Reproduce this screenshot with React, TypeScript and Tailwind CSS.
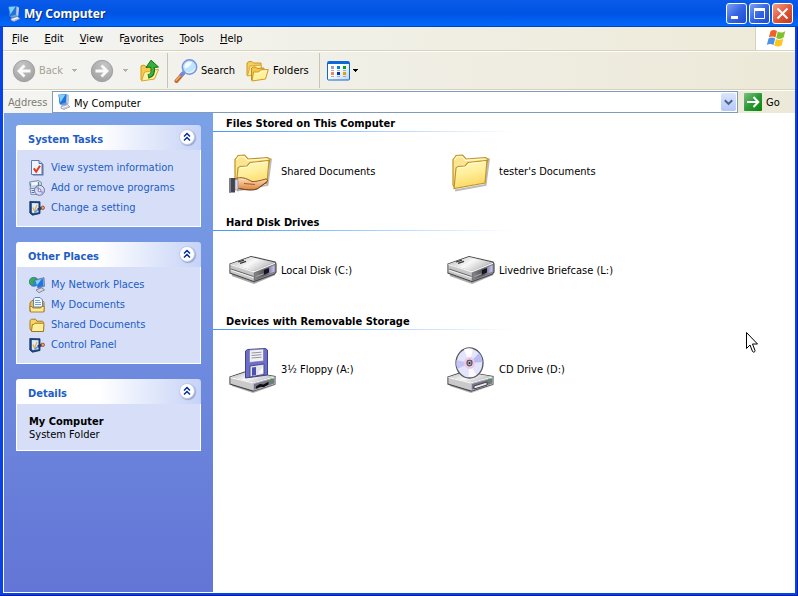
import type { ReactNode } from "react";

const menus = [
  { before: "", key: "F", after: "ile" },
  { before: "", key: "E", after: "dit" },
  { before: "", key: "V", after: "iew" },
  { before: "F", key: "a", after: "vorites" },
  { before: "", key: "T", after: "ools" },
  { before: "", key: "H", after: "elp" },
];

/* ---------- small icons ---------- */

function ComputerIcon() {
  return (
    <svg width="16" height="16" viewBox="0 0 16 16" className="shrink-0">
      <path d="M5 12.500 11.500 10.500l2.500 2.300L8 15.500 5 14.300z" fill="#c9ccd8" stroke="#8b8fa0" strokeWidth=".6" />
      <path d="M6 13.600 12 11.600" stroke="#fff" strokeWidth=".9" />
      <path d="M2.500.8 11 .3l2 1.500-.8 8.500L6 11.800 3.500 10z" fill="#6f9cd8" />
      <path d="M2.500.8 10.500.3 10 8.500 4 10.200z" fill="#1f74dc" />
      <path d="M2.800 1 9.500.6 4.500 8.200z" fill="#7fd0fb" />
      <path d="m10.700.4 2.300 1.400-.8 8.500-2-1.500z" fill="#b9c9e6" />
    </svg>
  );
}

function SystemInfoIcon() {
  return (
    <svg width="16" height="16" viewBox="0 0 16 16">
      <path d="M4 2.500h8l2.500 2V15.500H4z" fill="#42507c" opacity=".75" />
      <path d="M2.500.5h7.500l3 3v11H2.500z" fill="#eef4ff" stroke="#6379ad" />
      <path d="M10 .5v3h3" fill="#bfcdea" stroke="#40558c" strokeWidth=".8" />
      <path d="m4.800 8.300 2.400 3.400L11 5.800" fill="none" stroke="#e8381c" strokeWidth="2" />
    </svg>
  );
}

function ProgramsIcon() {
  return (
    <svg width="16" height="16" viewBox="0 0 16 16">
      <path d="m.5 2 9-1.500 3 2V9L2 12z" fill="#c5d3e8" stroke="#6c7fa6" strokeWidth=".8" />
      <path d="m2.500 2.500 6-.8v3l-6 .8z" fill="#f4f8fd" />
      <path d="M1.500 3.500v3M9.500 2v4" stroke="#4e9c68" />
      <path d="M1 8.500h7v6H2z" fill="#e4eaf3" stroke="#6d7f9f" strokeWidth=".8" />
      <path d="M2.500 10.500h3M2.500 12.500h3" stroke="#3978c8" />
      <circle cx="10.500" cy="10.300" r="5" fill="#dcdef8" stroke="#62668e" strokeWidth=".9" />
      <path d="m10.500 10.300-4-2.500a5 5 0 0 1 3-2zM10.500 10.300l4.500 1.500-2 2.500z" fill="#9ea0ea" />
      <circle cx="10.500" cy="10.300" r="1.400" fill="#fff" stroke="#5a5d78" strokeWidth=".8" />
    </svg>
  );
}

function SettingIcon() {
  return (
    <svg width="16" height="16" viewBox="0 0 16 16">
      <path d="m.8 1.500 10.200.3V13.500L3.500 15.200.8 13z" fill="#1d4588" stroke="#142d5e" strokeWidth=".8" />
      <path d="m2.800 3 6.700.2v9L4 13.300l-1.200-1z" fill="#dcebfb" />
      <path d="m3.800 7.500 1.700 3.500 2.500-6" fill="none" stroke="#e4b03c" strokeWidth="1.200" />
      <path d="m5.500 12.500 4.500-4" stroke="#5f93d6" strokeWidth="1.600" />
      <path d="m9 9.500 4-1.800" stroke="#1f3f78" strokeWidth="2.600" />
      <circle cx="13.800" cy="7.800" r="1.700" fill="#e9a06d" stroke="#803516" strokeWidth=".7" />
    </svg>
  );
}

function NetworkIcon() {
  return (
    <svg width="16" height="16" viewBox="0 0 16 16">
      <circle cx="4.800" cy="4.800" r="4.500" fill="#2888d6" stroke="#1a5a9a" strokeWidth=".6" />
      <path d="M1.500 2C3.500 0 6 .3 7 1.500L5.500 4 3.500 4.500 4.500 7 3 8.300C.5 6.500 0 4 1.500 2z" fill="#3bab42" />
      <path d="m5.500 3 9.500-2.300.5 8.500-6.500 2z" fill="#86a7db" stroke="#49659c" strokeWidth=".7" />
      <path d="m6.500 3.700 7.300-1.800.3 7-5 1.600z" fill="#1f76df" />
      <path d="m6.500 3.700 6-1.500-4.500 6z" fill="#85d2fa" />
      <path d="m7 13 5.500-2.200 3 2L10 15.700z" fill="#d5d8e2" stroke="#6c7284" strokeWidth=".8" />
    </svg>
  );
}

function DocumentsIcon() {
  return (
    <svg width="16" height="16" viewBox="0 0 16 16">
      <path d="M1 6 3 3.500h10.500l1.500 2v9H1z" fill="#efbf4f" stroke="#a9711b" />
      <path d="M4.500 10V2L6 .5h5L13.500 3v7z" fill="#f3f8ff" stroke="#4d7bb4" strokeWidth=".9" />
      <path d="M6 3.500h5M6 5.500h6M6 7.500h6" stroke="#72a7df" />
      <path d="M.8 9.500h2l1 1.500h8l1-1.500h2.500l-.5 5.500H1.500z" fill="#ffeb98" stroke="#a8741f" strokeWidth=".9" />
    </svg>
  );
}

function FolderIcon() {
  return (
    <svg width="16" height="16" viewBox="0 0 16 16">
      <path d="M1 12V3.500l1.500-1.300h4l1.500 2h5.500l1 1V14H2.500z" fill="#f6d566" stroke="#a97a1f" />
      <path d="m2.500 14 .8-6.500h1.500L6 6.200h8.500L15 7l-.5 7.500h-12z" fill="#ffef98" stroke="#a8751f" />
    </svg>
  );
}

function WindowsFlag() {
  return (
    <svg width="20" height="19" viewBox="0 0 20 19">
      <path d="M4.500 2.200C6.500.6 8.500.6 11 2L9.400 8.500C7 7.200 5 7.200 2.800 8.500z" fill="#ef6329" />
      <path d="M11.800 2.500c2.200 1.300 4.500 1.500 7.500-.5l-1.700 6.600c-2.500 1.700-5 1.600-7.400.4z" fill="#80c22e" />
      <path d="M2.500 9.500c2.200-1.500 4.300-1.300 6.700-.1l-1.700 6.700c-2.500-1.400-4.500-1.200-6.700 0z" fill="#4c93e5" />
      <path d="M10 9.900c2.500 1.200 5 1.300 7.300-.2l-1.700 6.700c-2.500 1.600-5 1.400-7.300.1z" fill="#fdc61e" />
    </svg>
  );
}

/* ---------- toolbar icons ---------- */

function ArrowDisc({ flip }: { flip?: boolean }) {
  return (
    <svg width="24" height="24" viewBox="0 0 24 24" className={flip ? "-scale-x-100" : ""}>
      <defs>
        <radialGradient id="disc" cx=".4" cy=".25" r=".8">
          <stop offset="0" stopColor="#c6c6c6" />
          <stop offset="1" stopColor="#a0a0a0" />
        </radialGradient>
      </defs>
      <circle cx="12" cy="12" r="10.700" fill="url(#disc)" stroke="#989898" strokeWidth=".8" />
      <path d="M18.500 12H8M12.500 6.500 7 12l5.500 5.500" fill="none" stroke="#fafafa" strokeWidth="2.800" />
    </svg>
  );
}

function UpIcon() {
  return (
    <svg width="22" height="24" viewBox="0 0 22 24">
      <path d="M2 21V7l3-1 2 1.500 5-.5 1 12z" fill="#f6ca4c" stroke="#cf9a20" />
      <path d="m2.500 22 3-9 5-.5 1.500-1.500 7.500-.5-4 9.500z" fill="#fff2a4" stroke="#d7a52c" />
      <path d="M9 17.500c5-1 5.500-4.500 4.500-10" fill="none" stroke="#156f17" strokeWidth="4.500" />
      <path d="M12 1.200 19.500 8l-4 .5-5.500-.3L7 8.500z" fill="#38b03b" stroke="#156f17" />
      <path d="M9.500 17c4.500-1 4.800-4.500 3.800-10" fill="none" stroke="#3bb43d" strokeWidth="2.600" />
    </svg>
  );
}

function SearchIcon() {
  return (
    <svg width="24" height="24" viewBox="0 0 24 24">
      <path d="M2.500 22 9 14.500" stroke="#c4652a" strokeWidth="4" strokeLinecap="round" />
      <path d="M2.300 21.300 6.500 16.500" stroke="#f0a86a" strokeWidth="1.600" strokeLinecap="round" />
      <path d="m6.500 17 3.500-3.800" stroke="#6f8cda" strokeWidth="3.600" />
      <circle cx="15.500" cy="8" r="7.200" fill="#bce4fb" stroke="#7793dc" strokeWidth="1.500" />
      <path d="M10.500 8a5 5 0 0 1 7.500-4.500c-1 3-4 5.500-7.500 6z" fill="#f4fcff" />
      <path d="M12 12.700a6 6 0 0 0 9-3.500" fill="none" stroke="#e0f4ff" strokeWidth="1.300" />
    </svg>
  );
}

function FoldersIcon() {
  return (
    <svg width="24" height="22" viewBox="0 0 24 22">
      <path d="M1 15.500V3l2-1.500h3L7.500 3H15v11z" fill="#f5cf5d" stroke="#cc9826" />
      <path d="M1.500 16 4 6l11-1 1 8z" fill="#fff0a0" stroke="#d7a535" />
      <path d="M5.500 20V8l2-1 2.500.200 1 1.300 7-.5V18z" fill="#f3c74c" stroke="#c78d1b" />
      <path d="m6 21 1.500-9h5l2-2 7.800-.5L19.500 19z" fill="#fff09a" stroke="#cf9926" />
      <path d="m9 13.500 4.500-.2 2-2 5-.3" fill="none" stroke="#fffbe0" />
    </svg>
  );
}

function ViewsIcon() {
  return (
    <svg width="23" height="20" viewBox="0 0 23 20">
      <defs>
        <linearGradient id="views" x1="0" y1="0" x2="1" y2="1">
          <stop offset=".4" stopColor="#fff" />
          <stop offset="1" stopColor="#bcd4f4" />
        </linearGradient>
      </defs>
      <rect x=".5" y=".5" width="22" height="18.500" rx="1" fill="url(#views)" stroke="#1366cb" />
      <rect x="1" y="1" width="21" height="2" fill="#0c66dc" />
      <path d="M4 5h3v3H4z" fill="#9c9bd0" />
      <path d="M10 5h3v3h-3z" fill="#0080ef" />
      <path d="M16 5h3v3h-3z" fill="#09a209" />
      <path d="M4 11h3v3H4z" fill="#ff8054" />
      <path d="M10 11h3v3h-3z" fill="#0535a5" />
      <path d="M16 11h3v3h-3z" fill="#d7a508" />
      <path d="M4 9.500h3M10 9.500h3M16 9.500h3M4 15.500h3M10 15.500h3M16 15.500h3" stroke="#adadad" />
    </svg>
  );
}

function DownArrow({ color }: { color: string }) {
  return (
    <svg width="5" height="3" viewBox="0 0 5 3" shapeRendering="crispEdges">
      <path d="M0 0h5v1H0zM1 1h3v1H1zM2 2h1v1H2z" fill={color} />
    </svg>
  );
}

/* ---------- large icons ---------- */

function LargeFolder({ shared }: { shared?: boolean }) {
  return (
    <svg width="48" height="48" viewBox="0 0 48 48">
      <defs>
        <linearGradient id="folder" x1="0" y1="0" x2=".3" y2="1">
          <stop offset="0" stopColor="#fffbc4" />
          <stop offset=".5" stopColor="#ffef9c" />
          <stop offset="1" stopColor="#fcd863" />
        </linearGradient>
        <linearGradient id="hand" x1="0" y1="0" x2="0" y2="1">
          <stop offset="0" stopColor="#ffe2bd" />
          <stop offset="1" stopColor="#dc8640" />
        </linearGradient>
      </defs>
      <path d="m8 42.500 30.500-5.500L42 10.500" fill="none" stroke="#555" strokeWidth="2" opacity=".4" />
      <path d="M6 37V11.500l1.500-1.500L9 7.500 15.500 7l3.500 4 19.500-1.500L41 11l-1.500 6L8 40z" fill="#fbe590" stroke="#bf9325" strokeWidth="1.200" />
      <path d="m7.300 12 2.200-3 5.500-.500L18.500 12.300 38 11" fill="none" stroke="#fffbd4" strokeWidth="1.200" />
      <path d="M7 40.500 9 20l2-1.500 7-.5 3-3.500L40 12.500 38 35z" fill="url(#folder)" stroke="#c2942a" strokeWidth="1.200" />
      <path d="m10.200 20 8.300-.8 3-3.500 17-1.800" fill="none" stroke="#fffcdc" />
      {shared && (
        <g>
          <path d="M6 31c4-2 8-1.500 12 0l5 2.500c3 .5 8-1 14-2.500 2 0 2 1.500.5 3L28 41c-5 2-15 0-22-1z" fill="url(#hand)" stroke="#85471f" strokeWidth=".9" />
          <path d="M15 35.500 26 36.500" stroke="#a85c2c" strokeWidth="1.100" />
          <path d="M11 40.500c6 2 14 2 18 0l9-6.500" fill="none" stroke="#6b3a1c" strokeWidth="1" opacity=".7" />
          <path d="M0 30h6v14.500H0z" fill="#42454f" />
          <path d="M0 30h2v14.500H0z" fill="#7c7f8a" />
          <path d="M6 31.500h3V42H6z" fill="#d7d9e8" stroke="#676a7a" strokeWidth=".5" />
        </g>
      )}
    </svg>
  );
}

function Metal() {
  return (
    <defs>
      <linearGradient id="metalTop" x1="0" y1="0" x2="1" y2=".5">
        <stop offset="0" stopColor="#b5b5b5" />
        <stop offset=".55" stopColor="#f8f8f8" />
        <stop offset="1" stopColor="#bdbdbd" />
      </linearGradient>
      <linearGradient id="metalFront" x1="0" y1="0" x2="1" y2="0">
        <stop offset="0" stopColor="#8a8a8a" />
        <stop offset=".55" stopColor="#4c4c54" />
        <stop offset=".75" stopColor="#8d8db4" />
        <stop offset="1" stopColor="#cfcffa" />
      </linearGradient>
    </defs>
  );
}

function HardDisk() {
  return (
    <svg width="48" height="48" viewBox="0 0 48 48">
      <Metal />
      <path d="m3 28 22 8L46 27" fill="none" stroke="#555" strokeWidth="2" opacity=".5" />
      <path d="m1 17 21-7.500L46 15l1 2v8l-1.500 2L25 34.500 1 26z" fill="#a1a1a1" stroke="#4c4c4c" strokeWidth="1.200" />
      <path d="m1.500 17.300 23 7v9.500L1.500 25.500z" fill="#c6c6c6" />
      <path d="m2 22 22.500 7.500" stroke="#6a6a6a" strokeWidth="1.200" />
      <path d="m2 23.200 22.500 7.500" stroke="#f4f4f4" strokeWidth="1" />
      <path d="m1.500 17 20.500-7L45 15.500 25 24z" fill="url(#metalTop)" />
      <path d="M1.500 17.500 25 24.800l21-8.500" fill="none" stroke="#f5f5f5" strokeWidth="1.200" />
      <path d="m25.500 25.800 20.500-8.300V25l-20.500 8z" fill="url(#metalFront)" stroke="#6f6f7c" strokeWidth=".8" />
      <path d="m35 23 5-2v4.500l-5 2z" fill="#16161a" />
      <path d="m27.500 29.500 7-2.700" stroke="#a9a9a9" strokeWidth="1" />
      <path d="m9 15 6-1.800M11 16.300l6-2" stroke="#383838" strokeWidth="1.300" />
    </svg>
  );
}

function DriveBase({ children }: { children: ReactNode }) {
  return (
    <g>
      <path d="m3 39 21 7 22-8" fill="none" stroke="#555" strokeWidth="2" opacity=".45" />
      <path d="m1 31 16-5.500 29 5v7.500l-22 7L1 38z" fill="#aaa" stroke="#484848" strokeWidth="1.200" />
      <path d="M1.500 31.500 24 37v7.300L1.500 37.500z" fill="#cacaca" />
      <path d="m1.500 31 16-5L45.500 30.500 24 36.500z" fill="url(#metalTop)" />
      <path d="M1.500 31.500 24 37l21.500-6" fill="none" stroke="#fff" />
      <path d="m24.500 37.700 21.500-6v6l-21.500 6.500z" fill="#77777f" stroke="#b9b9d2" strokeWidth=".9" />
      {children}
      <circle cx="42.500" cy="34" r="1.300" fill="#2faa3b" />
    </g>
  );
}

function FloppyDrive() {
  return (
    <svg width="48" height="48" viewBox="0 0 48 48">
      <Metal />
      <DriveBase>
        <path d="m27 40.500 4-2.500 3.500.5 5-2.800v2.800l-5 2.800-3-.5-4.500 2z" fill="#0c0c0c" />
      </DriveBase>
      <path d="m16.500 5 2-1.500L36.500 2.500l2 1.500v25L16.500 32z" fill="#6c6ecb" stroke="#41428f" />
      <path d="m20.500 4 14-1V15l-14 1.500z" fill="#f1f1f5" stroke="#7678a6" strokeWidth=".7" />
      <path d="m22.500 7 10-.8M22.500 9.500l10-.8M22.500 12l10-.8" stroke="#94949f" />
      <path d="m21 20 14-2V28.500L21 31z" fill="#e4e4ec" stroke="#444582" strokeWidth=".9" />
      <path d="m23 21.500 4-.5v8l-4 .8z" fill="#4c50b4" />
      <path d="m29 27.500 5-6.500v5.700z" fill="#fff" />
    </svg>
  );
}

function CdDrive() {
  return (
    <svg width="48" height="48" viewBox="0 0 48 48">
      <Metal />
      <DriveBase>
        <path d="m27 40 13-4v3l-13 4z" fill="#ebebf2" stroke="#33333a" strokeWidth=".9" />
      </DriveBase>
      <ellipse cx="22.500" cy="17" rx="13.500" ry="15" fill="#e4e4fc" stroke="#55565e" strokeWidth="1.300" />
      <path d="M22.500 17 9.500 14a13 14 0 0 0 1 9z" fill="#c3c4f5" />
      <path d="M22.500 17 32 7a13 14 0 0 1 3.500 9z" fill="#b9bbf3" />
      <path d="M22.500 17 17 3.500A13 14 0 0 1 26 3z" fill="#fff" />
      <path d="m22.500 17 7 12a13 14 0 0 1-8 2z" fill="#fafaff" />
      <ellipse cx="22.500" cy="17" rx="4.500" ry="5" fill="none" stroke="#f4c3e4" strokeWidth="1.800" />
      <ellipse cx="22.500" cy="17" rx="2.500" ry="2.800" fill="#b5b5bb" stroke="#55555b" strokeWidth="1.200" />
      <circle cx="22.500" cy="17" r="1" fill="#222" />
    </svg>
  );
}

/* ---------- data ---------- */

const systemTasks = [
  { name: "View system information", icon: SystemInfoIcon },
  { name: "Add or remove programs", icon: ProgramsIcon },
  { name: "Change a setting", icon: SettingIcon },
];

const otherPlaces = [
  { name: "My Network Places", icon: NetworkIcon },
  { name: "My Documents", icon: DocumentsIcon },
  { name: "Shared Documents", icon: FolderIcon },
  { name: "Control Panel", icon: SettingIcon },
];

const groups = [
  {
    title: "Files Stored on This Computer",
    items: [
      { name: "Shared Documents", icon: <LargeFolder shared /> },
      { name: "tester's Documents", icon: <LargeFolder /> },
    ],
  },
  {
    title: "Hard Disk Drives",
    items: [
      { name: "Local Disk (C:)", icon: <HardDisk /> },
      { name: "Livedrive Briefcase (L:)", icon: <HardDisk /> },
    ],
  },
  {
    title: "Devices with Removable Storage",
    items: [
      { name: "3½ Floppy (A:)", icon: <FloppyDrive /> },
      { name: "CD Drive (D:)", icon: <CdDrive /> },
    ],
  },
];

/* ---------- layout ---------- */

function TitleButton({ label, close, children }: { label: string; close?: boolean; children: ReactNode }) {
  return (
    <button
      aria-label={label}
      className={`flex size-[21px] items-center justify-center rounded-[3px] border border-white ${
        close
          ? "bg-linear-to-br from-[#f0a08a] via-[#e2583a] to-[#c03a16]"
          : "bg-linear-to-br from-[#7e9ef2] via-[#3565e4] to-[#1d4bd0]"
      }`}
    >
      <svg width="19" height="19" viewBox="0 0 19 19" fill="none" stroke="#fff">
        {children}
      </svg>
    </button>
  );
}

function TitleBar() {
  return (
    <header className="flex h-[27px] items-center bg-linear-to-b from-[#0a5be8] via-[#0054e3] via-50% to-[#006aff] pr-[5px] pl-1.5 shadow-[inset_0_-1px_0_#0042c4]">
      <ComputerIcon />
      <h1 className="flex-1 pt-px pl-0.5 font-['Noto_Sans',sans-serif] text-[12px] font-bold text-white [text-shadow:1px_1px_0_#0a2a80]">
        My Computer
      </h1>
      <div className="flex gap-0.5">
        <TitleButton label="Minimize">
          <path d="M4 13.500h7" strokeWidth="3" />
        </TitleButton>
        <TitleButton label="Maximize">
          <path d="M4.500 4v10.500h10V4" />
          <path d="M4 5.500h11" strokeWidth="3" />
        </TitleButton>
        <TitleButton label="Close" close>
          <path d="m4.500 4.500 10 10M14.500 4.500l-10 10" strokeWidth="2" />
        </TitleButton>
      </div>
    </header>
  );
}

function MenuBar() {
  return (
    <div className="flex h-6 border-b border-[#d8d2bd] bg-linear-to-r from-[#f4f4f2] to-[#edead8]">
      <nav className="flex flex-1 items-center gap-4 pl-[9px]">
        {menus.map((menu) => (
          <button key={menu.key}>
            {menu.before}
            <span className="underline">{menu.key}</span>
            {menu.after}
          </button>
        ))}
      </nav>
      <div className="flex w-10 items-center justify-center border-l border-[#d8d2bd] bg-white">
        <WindowsFlag />
      </div>
    </div>
  );
}

function Toolbar() {
  return (
    <div className="flex h-[39px] items-center border-t border-b border-t-white border-b-[#d8d2bd] bg-linear-to-r from-[#f4f4f2] to-[#ece9d8] pl-[9px]">
      <button disabled className="flex w-[55px] items-center gap-[3px] text-[#a5a294]">
        <ArrowDisc />
        Back
      </button>
      <button disabled aria-label="Back history" className="flex h-6 w-[23px] items-center justify-center pr-2">
        <DownArrow color="#b5b2a5" />
      </button>
      <button disabled aria-label="Forward" className="w-6">
        <ArrowDisc flip />
      </button>
      <button disabled aria-label="Forward history" className="flex h-6 w-[23px] items-center justify-center">
        <DownArrow color="#b5b2a5" />
      </button>
      <button aria-label="Up" className="flex w-[30px] justify-center pr-1">
        <UpIcon />
      </button>
      <div className="mr-1.5 h-[35px] w-px bg-[#c9c5b2]" />
      <button className="flex w-[72px] items-center gap-[3px]">
        <SearchIcon />
        Search
      </button>
      <button className="flex w-[73px] items-center gap-[3px]">
        <FoldersIcon />
        Folders
      </button>
      <div className="mr-[7px] h-[35px] w-px bg-[#c9c5b2]" />
      <button aria-label="Views" className="flex items-center gap-[3px]">
        <ViewsIcon />
        <DownArrow color="#000" />
      </button>
    </div>
  );
}

function AddressBar() {
  return (
    <div className="flex h-[23px] items-center border-t border-white bg-linear-to-r from-[#f4f4f2] to-[#ece9d8] pl-[5px]">
      <label htmlFor="address" className="w-11 pt-0.5 text-[#7f7c73]">
        A<span className="underline">d</span>dress
      </label>
      <div className="flex h-[22px] flex-1 items-center border border-[#7f9db9] bg-white pr-px pl-[3px]">
        <ComputerIcon />
        <input
          id="address"
          defaultValue="My Computer"
          className="h-[18px] min-w-0 flex-1 pt-0.5 pl-0.5 outline-none"
        />
        <button
          aria-label="Show addresses"
          className="flex h-[18px] w-[15px] items-center justify-center rounded-[2px] bg-linear-to-b from-[#dbe5fe] to-[#b3c7f7]"
        >
          <svg width="9" height="7" viewBox="0 0 9 7">
            <path d="m.8 1.200 3.700 3.700 3.700-3.700" fill="none" stroke="#4d6185" strokeWidth="2" />
          </svg>
        </button>
      </div>
      <button className="flex w-[57px] items-center gap-1 pl-1.5">
        <svg width="18" height="18" viewBox="0 0 18 18">
          <defs>
            <linearGradient id="go" x1="0" y1="0" x2="1" y2="1">
              <stop offset="0" stopColor="#7cc183" />
              <stop offset=".5" stopColor="#2b9a35" />
              <stop offset="1" stopColor="#07850b" />
            </linearGradient>
          </defs>
          <rect width="18" height="18" rx="1" fill="url(#go)" />
          <path d="M3 9h11M9.500 4 14.300 9l-4.800 5" fill="none" stroke="#fff" strokeWidth="2" />
        </svg>
        <span className="pt-0.5">Go</span>
      </button>
    </div>
  );
}

function SidePanel({ title, children }: { title: string; children: ReactNode }) {
  return (
    <section>
      <div className="flex h-[25px] items-center justify-between rounded-t-[3px] bg-linear-to-r from-white from-45% to-[#c6d3f7] pr-1.5 pl-3">
        <h2 className="pt-1 font-bold text-[#215dc6]">{title}</h2>
        <button
          aria-label={`Collapse ${title}`}
          className="mb-0.5 flex size-4 items-center justify-center rounded-full border border-[#c1cbe8] bg-white shadow-[1px_1px_1px_#98a6cf]"
        >
          <svg width="8" height="10" viewBox="0 0 8 10" fill="none" stroke="#00309c" strokeWidth="1.500">
            <path d="M1 4.500 4 1.500l3 3M1 8.500l3-3 3 3" />
          </svg>
        </button>
      </div>
      <div className="border border-t-0 border-white bg-[#d6dff7] px-3">{children}</div>
    </section>
  );
}

function LinkList({ links }: { links: typeof systemTasks }) {
  return (
    <ul className="py-2">
      {links.map((link) => {
        const Icon = link.icon;

        return (
          <li key={link.name}>
            <a href="#" className="flex h-5 items-center gap-1.5 whitespace-nowrap text-[#215dc6]">
              <Icon />
              {link.name}
            </a>
          </li>
        );
      })}
    </ul>
  );
}

function Sidebar() {
  return (
    <aside className="flex w-[210px] shrink-0 flex-col gap-[15px] border-l border-white bg-linear-to-b from-[#7ba2e7] to-[#6375d6] px-3 pt-3">
      <SidePanel title="System Tasks">
        <LinkList links={systemTasks} />
      </SidePanel>
      <SidePanel title="Other Places">
        <LinkList links={otherPlaces} />
      </SidePanel>
      <SidePanel title="Details">
        <div className="pt-[11px] pb-[9px] leading-[13px]">
          <p className="font-bold">My Computer</p>
          <p>System Folder</p>
        </div>
      </SidePanel>
    </aside>
  );
}

function FileGroups() {
  return (
    <main className="flex-1">
      {groups.map((group) => (
        <section key={group.title}>
          <h2 className="pt-[3px] pl-[13px] leading-[15px] font-bold">{group.title}</h2>
          <div className="h-px w-[300px] bg-linear-to-r from-[#3d95ff] to-white" />
          <ul className="flex flex-wrap py-4 pl-4">
            {group.items.map((item) => (
              <li key={item.name} className="flex w-[218px] items-center gap-1">
                {item.icon}
                {item.name}
              </li>
            ))}
          </ul>
        </section>
      ))}
    </main>
  );
}

export default function App() {
  return (
    <div className="relative flex min-h-screen flex-col bg-[#0842e8] font-['DejaVu_Sans_Condensed','DejaVu_Sans',sans-serif] text-[11px] leading-4 text-black shadow-[inset_-1px_-1px_0_#001ea0]">
      <TitleBar />
      <div className="mx-[3px] mb-[3px] flex flex-1 flex-col bg-white pb-px">
        <MenuBar />
        <Toolbar />
        <AddressBar />
        <div className="flex flex-1">
          <Sidebar />
          <FileGroups />
        </div>
      </div>

      {/* Mouse pointer */}
      <svg
        width="12"
        height="21"
        viewBox="0 0 12 21"
        className="pointer-events-none absolute top-[332px] left-[746px]"
      >
        <path d="M.5.500v16l3.500-3.500 2.500 6.500c.5 1.200 3 .5 2.500-1L6.500 12h5z" fill="#fff" stroke="#000" />
      </svg>
    </div>
  );
}
